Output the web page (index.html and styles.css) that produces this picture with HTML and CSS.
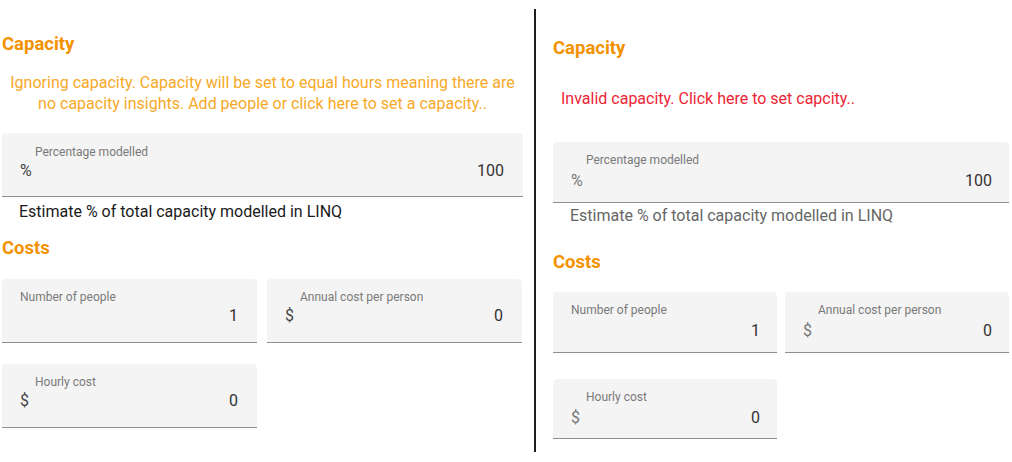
FILE: index.html
```html
<!DOCTYPE html>
<html lang="en">
<head>
<meta charset="utf-8">
<title>Capacity settings</title>
<link rel="stylesheet" href="styles.css">
</head>
<body>
<div class="page">
  <section class="pane pane-left">
    <h2 class="heading">Capacity</h2>
    <p class="notice notice-warn">Ignoring capacity. Capacity will be set to equal hours meaning there are<br>no capacity insights. Add people or click here to set a capacity..</p>
    <div class="field field-full">
      <div class="label label-prefixed">Percentage modelled</div>
      <div class="value-row"><span class="prefix">%</span><span class="value">100</span></div>
    </div>
    <p class="helper">Estimate % of total capacity modelled in LINQ</p>
    <h2 class="heading heading-costs">Costs</h2>
    <div class="row row-first">
      <div class="field field-half">
        <div class="label">Number of people</div>
        <div class="value-row"><span class="prefix"></span><span class="value">1</span></div>
      </div>
      <div class="field field-half">
        <div class="label label-prefixed">Annual cost per person</div>
        <div class="value-row"><span class="prefix">$</span><span class="value">0</span></div>
      </div>
    </div>
    <div class="row row-second">
      <div class="field field-half">
        <div class="label label-prefixed">Hourly cost</div>
        <div class="value-row"><span class="prefix">$</span><span class="value">0</span></div>
      </div>
    </div>
  </section>

  <div class="divider"></div>

  <section class="pane pane-right">
    <h2 class="heading">Capacity</h2>
    <p class="notice notice-error">Invalid capacity. Click here to set capcity..</p>
    <div class="field field-full">
      <div class="label label-prefixed">Percentage modelled</div>
      <div class="value-row"><span class="prefix">%</span><span class="value">100</span></div>
    </div>
    <p class="helper">Estimate % of total capacity modelled in LINQ</p>
    <h2 class="heading heading-costs">Costs</h2>
    <div class="row row-first">
      <div class="field field-half">
        <div class="label">Number of people</div>
        <div class="value-row"><span class="prefix"></span><span class="value">1</span></div>
      </div>
      <div class="field field-half">
        <div class="label label-prefixed">Annual cost per person</div>
        <div class="value-row"><span class="prefix">$</span><span class="value">0</span></div>
      </div>
    </div>
    <div class="row row-second">
      <div class="field field-half field-short">
        <div class="label label-prefixed">Hourly cost</div>
        <div class="value-row"><span class="prefix">$</span><span class="value">0</span></div>
      </div>
    </div>
  </section>
</div>
</body>
</html>
```

FILE: styles.css
```css
* { box-sizing: border-box; }

html, body {
  margin: 0;
  padding: 0;
  background: #ffffff;
}

body {
  font-family: Roboto, "Liberation Sans", Arial, sans-serif;
  color: #333333;
  width: 1012px;
  height: 462px;
  overflow: hidden;
}

.page {
  display: flex;
  align-items: flex-start;
}

.pane {
  display: flex;
  flex-direction: column;
}

.pane-left {
  width: 521px;
  margin-left: 2px;
}

.divider {
  width: 2px;
  height: 443px;
  margin-top: 9px;
  margin-left: 11px;
  background: #1e1e1e;
}

.pane-right {
  width: 456px;
  margin-left: 17px;
}

.heading {
  margin: 0;
  font-size: 18.5px;
  line-height: 20px;
  font-weight: 700;
  color: #f39200;
}

.notice {
  margin: 0;
  font-size: 16px;
  line-height: 21px;
}

.notice-warn {
  color: #f7a928;
  text-align: center;
}

.notice-error {
  color: #ec2535;
  padding-left: 8px;
}

.field {
  display: flex;
  flex-direction: column;
  height: 64px;
  background: #f4f4f4;
  border-bottom: 1px solid #8f8f8f;
  border-radius: 4px 4px 0 0;
  padding: 11px 19px 0 18px;
}

.label {
  font-size: 12px;
  line-height: 14px;
  color: #7a7a7a;
}

.label-prefixed {
  padding-left: 15px;
}

.value-row {
  display: flex;
  justify-content: space-between;
  align-items: center;
  margin-top: 4px;
  font-size: 16px;
  line-height: 16px;
  color: #333333;
}

.prefix {
  color: #444444;
}

.row {
  display: flex;
  gap: 10px;
}

.field-half {
  width: 255px;
}

.helper {
  margin: 7px 0 0 0;
  padding-left: 17px;
  font-size: 16px;
  line-height: 16px;
  color: #1a1a1a;
}

/* left pane vertical rhythm */
.pane-left .heading { margin-top: 34px; }
.pane-left .notice { margin-top: 18px; }
.pane-left .field-full { margin-top: 19px; }
.pane-left .field-full .label { margin-top: 1px; }
.pane-left .heading-costs { margin-top: 18px; }
.pane-left .row-first { margin-top: 21px; }
.pane-left .row-second { margin-top: 21px; }

/* right pane vertical rhythm */
.pane-right .heading { margin-top: 38px; }
.pane-right .notice { margin-top: 30px; }
.pane-right .field-full { margin-top: 33px; }
.pane-right .field {
  height: 61px;
  padding: 11px 17px 0 18px;
}
.pane-right .field-short { height: 60px; }
.pane-right .value-row { margin-top: 6px; }
.pane-right .helper {
  margin-top: 5px;
  color: #666666;
}
.pane-right .heading-costs { margin-top: 28px; }
.pane-right .row { gap: 8px; }
.pane-right .field-half { width: 224px; }
.pane-right .row-first { margin-top: 20px; }
.pane-right .row-second { margin-top: 26px; }
.pane-right .prefix { color: #777777; }
```
